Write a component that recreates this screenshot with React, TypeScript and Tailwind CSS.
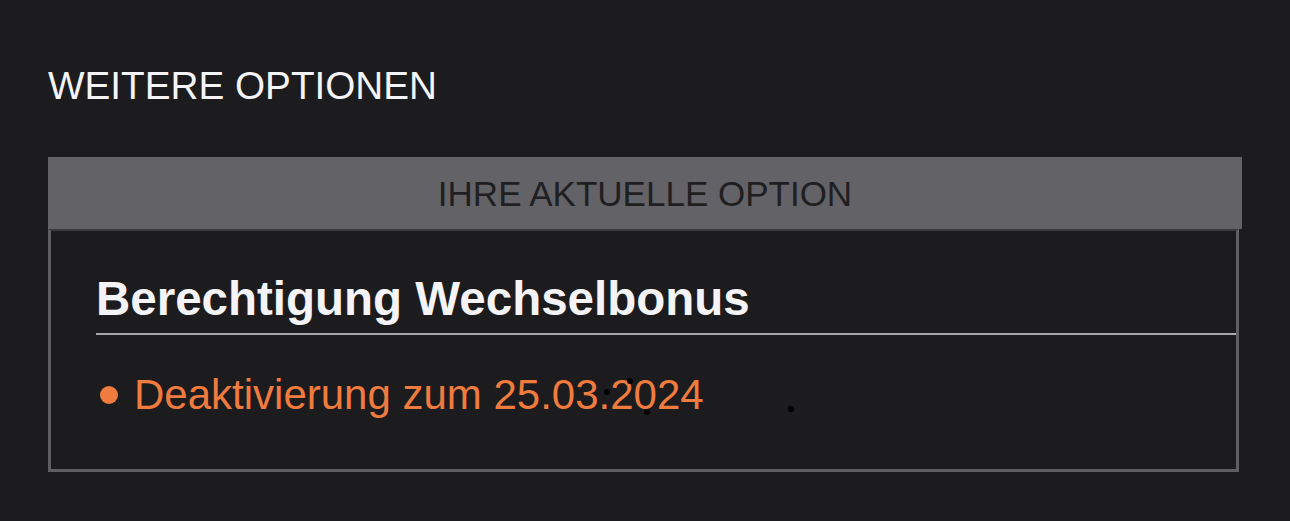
import React from 'react';

const DOTS = [
  { x: 607, y: 392 },
  { x: 630, y: 381 },
  { x: 647, y: 412 },
  { x: 791, y: 409 },
];

export default function App() {
  return (
    <div className="relative min-h-[521px] w-full bg-[#1c1c1e] font-['Liberation_Sans',Arial,sans-serif]">
      <div className="pl-[48px] pt-[66px]">
        {/* Section title */}
        <h2 className="text-[38.7px] leading-[40px] font-light text-[#f4f4f6]">WEITERE OPTIONEN</h2>

        <div className="mt-[51px] w-[1194px]">
          {/* Current option header */}
          <div className="h-[72px] bg-[#636267] flex items-center justify-center">
            <span className="text-[35px] leading-none text-[#1f1f22]">IHRE AKTUELLE OPTION</span>
          </div>

          {/* Option card */}
          <div className="w-[1191px] border-x-[3px] border-b-[3px] border-t-2 border-x-[#5f5f62] border-b-[#5f5f62] border-t-[#3a3a3d] pt-[44px] pb-[53px]">
            <div className="ml-[45px] border-b-2 border-[#a9a9ab] pb-[10px]">
              <h3 className="text-[47.5px] leading-none font-bold text-[#f4f4f6]">Berechtigung Wechselbonus</h3>
            </div>
            <div className="mt-[39px] ml-[49px] flex items-center gap-[16px]">
              <span className="h-[18px] w-[18px] rounded-full bg-[#f07b3f]" />
              <span className="text-[42px] leading-none text-[#f07b3f]">Deaktivierung zum 25.03.2024</span>
            </div>
          </div>
        </div>
      </div>

      {DOTS.map((d, i) => (
        <span
          key={i}
          className="absolute h-[6px] w-[6px] rounded-full bg-black"
          style={{ left: d.x - 3, top: d.y - 3 }}
        />
      ))}
    </div>
  );
}
